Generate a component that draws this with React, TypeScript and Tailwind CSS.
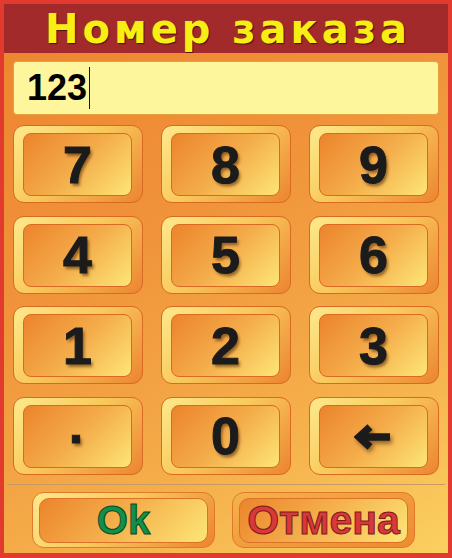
import type { ReactNode } from "react";

const digitText =
  "font-['Liberation_Sans',Arial,sans-serif] text-[52px] font-bold leading-none text-[#1b1b1b] [-webkit-text-stroke:1px_#1b1b1b] [text-shadow:2px_3px_3px_rgba(70,35,0,0.55)]";

function Key({ children }: { children: ReactNode }) {
  return (
    <div className="rounded-[11px] border border-[#d86a22] bg-[linear-gradient(135deg,#fee98c_0%,#f9c95c_45%,#ec8430_100%)] pb-[6px] pl-[9px] pr-[10px] pt-[7px]">
      <div className="flex h-full items-center justify-center rounded-[8px] border border-[#d86a22] bg-[linear-gradient(135deg,#ec842c_0%,#f4ac4a_50%,#fde676_100%)]">
        {children}
      </div>
    </div>
  );
}

function BigButton({ children, outer }: { children: ReactNode; outer: string }) {
  return (
    <div className={`h-[56px] w-[183px] rounded-[12px] border border-[#de7a2a] px-[6px] pb-[4px] pt-[5px] ${outer}`}>
      <div className="flex h-full items-center justify-center rounded-[10px] border border-[#dc7226] bg-[linear-gradient(135deg,#ec842c_0%,#f5b24e_50%,#fde676_100%)]">
        {children}
      </div>
    </div>
  );
}

function Backspace() {
  return (
    <svg
      width="38"
      height="26"
      viewBox="0 0 38 26"
      className="mr-[2px] mt-[2px] [filter:drop-shadow(2px_3px_2px_rgba(70,35,0,0.55))]"
    >
      <polyline points="16,3 5,13 16,23" fill="none" stroke="#1b1b1b" strokeWidth="7.5" strokeLinejoin="miter" />
      <line x1="7" y1="13" x2="36" y2="13" stroke="#1b1b1b" strokeWidth="7.5" />
    </svg>
  );
}

export default function App() {
  const keys = ["7", "8", "9", "4", "5", "6", "1", "2", "3"];

  return (
    <div className="flex h-[558px] w-[452px] flex-col border-[4px] border-b-[5px] border-[#e23a2e] bg-[#e23a2e]">
      <header className="flex h-[49px] shrink-0 items-center justify-center bg-[#a32a2a]">
        <h1 className="ml-[4px] font-['DejaVu_Sans',Verdana,sans-serif] text-[40px] font-bold leading-none tracking-[4px] text-[#f7ee14] [text-shadow:1px_1px_1px_#4a0e0e]">
          Номер заказа
        </h1>
      </header>

      <main className="flex flex-1 flex-col bg-[linear-gradient(150deg,#ee8630_0%,#f0933a_35%,#f5ae4a_70%,#fbd060_100%)] px-[9px] pb-[5px] pt-[8px]">
        <div className="flex h-[54px] items-center rounded-[4px] border border-[#e6a23e] bg-[#fef69c] pl-[13px]">
          <span className="font-['Liberation_Sans',Arial,sans-serif] text-[36px] font-bold leading-none text-black">
            123
          </span>
          <span className="ml-[2px] h-[42px] w-px bg-[#141432]" />
        </div>

        <div className="mt-[10px] grid grid-cols-3 grid-rows-[repeat(4,78px)] gap-x-[18px] gap-y-[12.67px]">
          {keys.map((k) => (
            <Key key={k}>
              <span className={digitText}>{k}</span>
            </Key>
          ))}
          <Key>
            <span className={`${digitText} mt-[4px]`}>·</span>
          </Key>
          <Key>
            <span className={digitText}>0</span>
          </Key>
          <Key>
            <Backspace />
          </Key>
        </div>

        <div className="-mx-[6px] mt-[9px] h-px bg-[#c69a62]" />

        <div className="mt-[7px] flex gap-[17px] pl-[19px]">
          <BigButton outer="bg-[linear-gradient(135deg,#fee98c_0%,#f9c95c_45%,#ec8430_100%)]">
            <span className="font-['Liberation_Sans',Arial,sans-serif] text-[40px] font-bold leading-none text-[#12904a] [-webkit-text-stroke:1px_#0b4a24]">
              Ok
            </span>
          </BigButton>
          <BigButton outer="bg-[linear-gradient(160deg,#f5b24c_0%,#f2a040_40%,#ee8a32_100%)]">
            <span className="font-['Liberation_Sans',Arial,sans-serif] text-[41px] font-bold leading-none text-[#d8383a] [-webkit-text-stroke:1px_#7a1a1a]">
              Отмена
            </span>
          </BigButton>
        </div>
      </main>
    </div>
  );
}
